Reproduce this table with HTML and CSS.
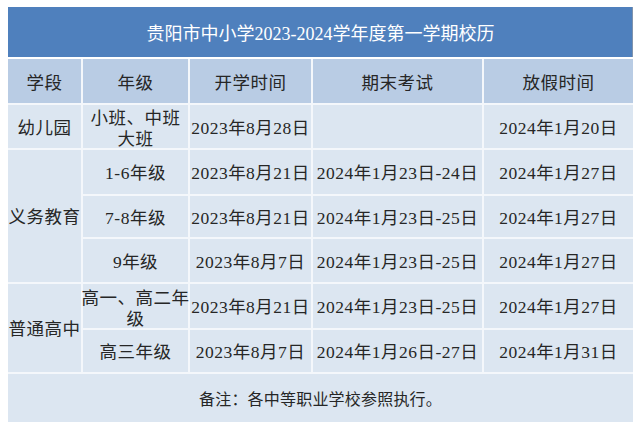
FILE: index.html
```html
<!DOCTYPE html>
<html lang="zh-CN">
<head>
<meta charset="utf-8">
<title>贵阳市中小学2023-2024学年度第一学期校历</title>
<link rel="stylesheet" href="styles.css">
</head>
<body>
<div class="sheet">
  <div class="title">贵阳市中小学2023-2024学年度第一学期校历</div>
  <div class="grid">
    <div class="cell head">学段</div>
    <div class="cell head">年级</div>
    <div class="cell head">开学时间</div>
    <div class="cell head">期末考试</div>
    <div class="cell head">放假时间</div>

    <div class="cell">幼儿园</div>
    <div class="cell two">小班、中班<br>大班</div>
    <div class="cell">2023年8月28日</div>
    <div class="cell"></div>
    <div class="cell">2024年1月20日</div>

    <div class="cell span3">义务教育</div>
    <div class="cell">1-6年级</div>
    <div class="cell">2023年8月21日</div>
    <div class="cell">2024年1月23日-24日</div>
    <div class="cell">2024年1月27日</div>

    <div class="cell">7-8年级</div>
    <div class="cell">2023年8月21日</div>
    <div class="cell">2024年1月23日-25日</div>
    <div class="cell">2024年1月27日</div>

    <div class="cell">9年级</div>
    <div class="cell">2023年8月7日</div>
    <div class="cell">2024年1月23日-25日</div>
    <div class="cell">2024年1月27日</div>

    <div class="cell span2">普通高中</div>
    <div class="cell two">高一、高二年<br>级</div>
    <div class="cell">2023年8月21日</div>
    <div class="cell">2024年1月23日-25日</div>
    <div class="cell">2024年1月27日</div>

    <div class="cell">高三年级</div>
    <div class="cell">2023年8月7日</div>
    <div class="cell">2024年1月26日-27日</div>
    <div class="cell">2024年1月31日</div>

    <div class="cell note">备注：各中等职业学校参照执行。</div>
  </div>
</div>
</body>
</html>
```

FILE: styles.css
```css
html, body {
  margin: 0;
  padding: 0;
  background: #ffffff;
  overflow: hidden;
}

body {
  font-family: "Liberation Serif", "Noto Sans CJK SC", serif;
  color: #262626;
}

.sheet {
  padding: 7px 0 0 8px;
  width: 625px;
}

.title {
  height: 50px;
  background: #4f80bd;
  color: #ffffff;
  font-size: 18px;
  display: flex;
  align-items: center;
  justify-content: center;
  margin-bottom: 2px;
  box-shadow: inset -1px 0 0 #7f93ad;
}

.grid {
  display: grid;
  grid-template-columns: 73px 105px 121px 169px 149px;
  grid-template-rows: 44px 43px 44px 41px 43px 44px 42px 48px;
  gap: 2px;
  background: #f4f7fb;
}

.cell {
  background: #dce6f1;
  display: flex;
  align-items: center;
  justify-content: center;
  text-align: center;
  font-size: 17.5px;
  letter-spacing: 0.5px;
  line-height: 20px;
  white-space: nowrap;
  padding-top: 2px;
}

.head {
  background: #b9cce4;
  padding-top: 4px;
}

.two {
  line-height: 21px;
  padding-top: 5px;
}

.span3 {
  grid-row: span 3;
}

.span2 {
  grid-row: span 2;
}

.note {
  grid-column: 1 / -1;
  font-size: 16px;
  letter-spacing: 0.2px;
  padding-top: 4px;
}
```
